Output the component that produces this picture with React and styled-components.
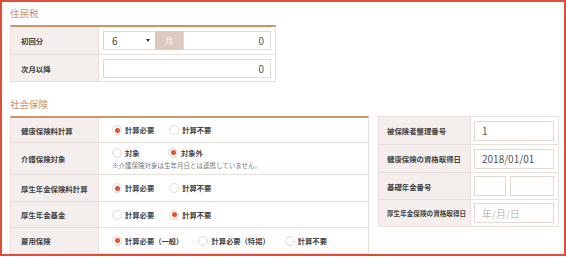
import React from "react";
import styled, { createGlobalStyle } from "styled-components";

const GlobalStyle = createGlobalStyle`
  * { box-sizing: border-box; }
  body {
    margin: 0;
    background: #fff;
    color: #333;
    font-family: "Noto Sans CJK JP", "Noto Sans", sans-serif;
  }
`;

const Frame = styled.div`
  width: 566px;
  height: 256px;
  border: 2px solid #e14d3c;
  padding: 2px 0 0 8px;
`;

const SectionTitle = styled.div`
  font-size: 9.5px;
  line-height: 14px;
  color: #c8926b;
  padding-top: ${(p) => p.$top}px;
  margin-bottom: 5px;
`;

const Columns = styled.div`
  display: flex;
  align-items: flex-start;
  gap: 9px;
`;

const Table = styled.div`
  width: ${(p) => p.$width}px;
  border: 1px solid #e9e0db;
  border-top: ${(p) => (p.$accent ? "2px solid #c8956c" : "1px solid #e9e0db")};
`;

const Row = styled.div`
  display: grid;
  grid-template-columns: ${(p) => p.$label}px 1fr;
  height: ${(p) => p.$h}px;
  & + & {
    border-top: 1px solid #e9e0db;
  }
`;

const Label = styled.div`
  display: flex;
  align-items: center;
  background: #f4efed;
  border-right: 1px solid #e9e0db;
  padding-left: ${(p) => p.$pad}px;
  font-size: ${(p) => p.$size || 7.4}px;
  font-weight: 700;
  color: #444;
  white-space: nowrap;
`;

const Cell = styled.div`
  display: flex;
  flex-direction: ${(p) => (p.$stack ? "column" : "row")};
  justify-content: ${(p) => (p.$stack ? "center" : "flex-start")};
  align-items: ${(p) => (p.$stack ? "flex-start" : "center")};
  gap: ${(p) => p.$gap || 0}px;
  padding: 0 4px 0 ${(p) => p.$pad}px;
`;

const Group = styled.div`
  display: flex;
  flex: 1;
  height: 19px;
`;

const SelectBox = styled.div`
  width: 52px;
  display: flex;
  align-items: center;
  justify-content: space-between;
  padding: 0 5px 0 8px;
  border: 1px solid #e3d8d2;
  border-right: none;
  font-size: 10px;
  color: #444;
`;

const Caret = styled.span`
  width: 0;
  height: 0;
  border-left: 2.5px solid transparent;
  border-right: 2.5px solid transparent;
  border-top: 3px solid #333;
`;

const Addon = styled.div`
  width: 28px;
  display: flex;
  align-items: center;
  justify-content: center;
  background: #dccabd;
  color: #fff;
  font-size: 8px;
`;

const Field = styled.input`
  width: ${(p) => (p.$w ? `${p.$w}px` : "0")};
  flex: ${(p) => (p.$w ? "none" : "1 1 0")};
  min-width: 0;
  height: ${(p) => p.$h || 20}px;
  border: 1px solid #e3d8d2;
  border-radius: 0;
  outline: none;
  margin: 0;
  padding: 0 ${(p) => (p.$right ? 6 : 4)}px 0 ${(p) => (p.$right ? 4 : 7)}px;
  text-align: ${(p) => (p.$right ? "right" : "left")};
  font-family: inherit;
  font-size: 10px;
  color: #555;
  background: #fff;
  &::placeholder {
    color: #bdbdbd;
  }
`;

const Radios = styled.div`
  display: flex;
  align-items: center;
  line-height: 12px;
`;

const RadioItem = styled.label`
  display: flex;
  align-items: center;
  gap: 3px;
  min-width: 56px;
  padding-right: 15px;
  font-size: 7.3px;
  font-weight: 700;
  color: #444;
  white-space: nowrap;
`;

const Dot = styled.span`
  width: 10px;
  height: 10px;
  border-radius: 50%;
  border: 1px solid #dcdcdc;
  background: #fff;
  display: flex;
  align-items: center;
  justify-content: center;
  &::after {
    content: "";
    width: 5px;
    height: 5px;
    border-radius: 50%;
    background: ${(p) => (p.$on ? "#e9502f" : "transparent")};
  }
`;

const Note = styled.div`
  font-size: 6.5px;
  line-height: 12px;
  color: #777;
  white-space: nowrap;
`;

const Radio = ({ on, children }) => (
  <RadioItem>
    <Dot $on={on} />
    {children}
  </RadioItem>
);

const RadioRow = ({ options, checked }) => (
  <Radios>
    {options.map((o, i) => (
      <Radio key={o} on={i === checked}>
        {o}
      </Radio>
    ))}
  </Radios>
);

const calc = ["計算必要", "計算不要"];

const App = () => {
  return (
    <>
      <GlobalStyle />
      <Frame>
        <SectionTitle $top={2}>住民税</SectionTitle>
        <Table $width={266} $accent>
          <Row $label={88} $h={27}>
            <Label $pad={10}>初回分</Label>
            <Cell $pad={4}>
              <Group>
                <SelectBox>
                  6<Caret />
                </SelectBox>
                <Addon>月</Addon>
                <Field $right $h={19} defaultValue="0" readOnly />
              </Group>
            </Cell>
          </Row>
          <Row $label={88} $h={27}>
            <Label $pad={10}>次月以降</Label>
            <Cell $pad={4}>
              <Field $right $h={19} defaultValue="0" readOnly />
            </Cell>
          </Row>
        </Table>

        <SectionTitle $top={15}>社会保険</SectionTitle>
        <Columns>
          <Table $width={359} $accent>
            <Row $label={88} $h={24}>
              <Label $pad={10}>健康保険料計算</Label>
              <Cell $pad={13}>
                <RadioRow options={calc} checked={0} />
              </Cell>
            </Row>
            <Row $label={88} $h={32}>
              <Label $pad={10}>介護保険対象</Label>
              <Cell $pad={13} $stack>
                <RadioRow options={["対象", "対象外"]} checked={1} />
                <Note>※介護保険対象は生年月日とは連携していません。</Note>
              </Cell>
            </Row>
            <Row $label={88} $h={27}>
              <Label $pad={10}>厚生年金保険料計算</Label>
              <Cell $pad={13}>
                <RadioRow options={calc} checked={0} />
              </Cell>
            </Row>
            <Row $label={88} $h={26}>
              <Label $pad={10}>厚生年金基金</Label>
              <Cell $pad={13}>
                <RadioRow options={calc} checked={1} />
              </Cell>
            </Row>
            <Row $label={88} $h={26}>
              <Label $pad={10}>雇用保険</Label>
              <Cell $pad={13}>
                <RadioRow
                  options={["計算必要（一般）", "計算必要（特掲）", "計算不要"]}
                  checked={0}
                />
              </Cell>
            </Row>
          </Table>

          <Table $width={181}>
            <Row $label={92} $h={27}>
              <Label $pad={8}>被保険者整理番号</Label>
              <Cell $pad={3}>
                <Field defaultValue="1" readOnly />
              </Cell>
            </Row>
            <Row $label={92} $h={28}>
              <Label $pad={8}>健康保険の資格取得日</Label>
              <Cell $pad={3}>
                <Field defaultValue="2018/01/01" readOnly />
              </Cell>
            </Row>
            <Row $label={92} $h={27}>
              <Label $pad={8}>基礎年金番号</Label>
              <Cell $pad={3} $gap={4}>
                <Field $w={32} readOnly />
                <Field readOnly />
              </Cell>
            </Row>
            <Row $label={92} $h={27}>
              <Label $pad={8} $size={6.6}>
                厚生年金保険の資格取得日
              </Label>
              <Cell $pad={3}>
                <Field placeholder="年/月/日" readOnly />
              </Cell>
            </Row>
          </Table>
        </Columns>
      </Frame>
    </>
  );
};

export default App;
